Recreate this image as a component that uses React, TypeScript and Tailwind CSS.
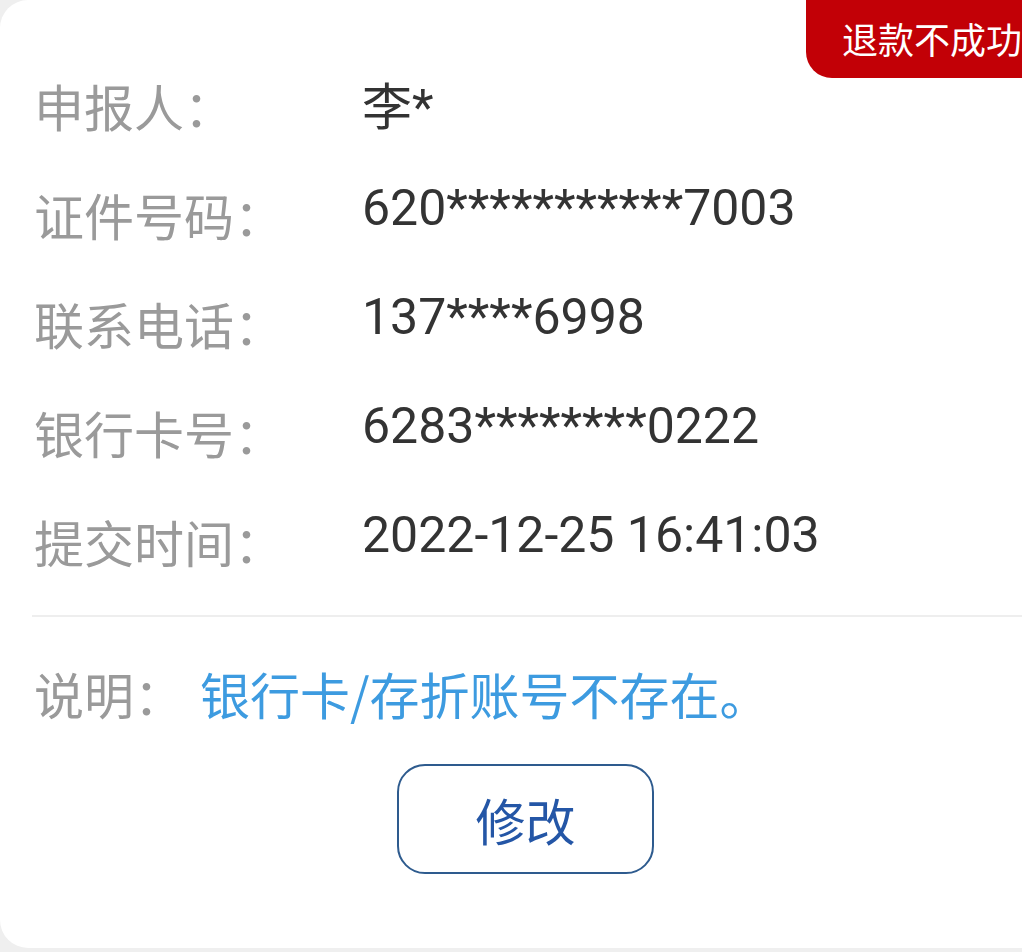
const rows = [
  { label: '申报人：', value: '李*', cjk: true },
  { label: '证件号码：', value: '620***********7003', cjk: false },
  { label: '联系电话：', value: '137****6998', cjk: false },
  { label: '银行卡号：', value: '6283********0222', cjk: false },
  { label: '提交时间：', value: '2022-12-25 16:41:03', cjk: false },
];

const App = () => {
  return (
    <div className="w-[1022px] h-[952px] bg-[#efefef] overflow-hidden font-['Roboto','Noto_Sans_CJK_SC',sans-serif]">
      {/* Card */}
      <div className="relative w-[1060px] h-[948px] bg-white rounded-l-[28px]">
        {/* Status badge */}
        <div className="absolute top-0 left-[806px] w-[254px] h-[78px] bg-[#c20006] rounded-bl-[26px] flex items-center pl-[36px]">
          <span className="text-white text-[36px] leading-none font-['Noto_Sans_CJK_SC',sans-serif] -translate-y-[1px]">退款不成功</span>
        </div>

        {/* Info rows */}
        <div className="pt-[44px] pl-[34px]">
          {rows.map((row) => (
            <div key={row.label} className="flex items-center h-[109px]">
              <span className="w-[328px] text-[50px] leading-none text-[#9a9a9a] font-['Noto_Sans_CJK_SC',sans-serif] translate-y-[6px]">
                {row.label}
              </span>
              <span className={row.cjk ? 'text-[50px] leading-none text-[#333333] translate-y-[9px]' : 'text-[50px] leading-none text-[#333333]'}>
                {row.value}
              </span>
            </div>
          ))}
        </div>

        {/* Divider */}
        <div className="mt-[26px] ml-[32px] h-[2px] bg-[#eeeeee]" />

        {/* Remark */}
        <div className="mt-[21px] pl-[34px] flex items-center h-[110px] font-['Noto_Sans_CJK_SC',sans-serif]">
          <span className="w-[166px] text-[50px] leading-none text-[#9a9a9a]">说明：</span>
          <span className="text-[50px] leading-none text-[#3d9be0]">银行卡/存折账号不存在。</span>
        </div>

        {/* Edit button */}
        <button className="mt-[16px] ml-[397px] w-[257px] h-[110px] border-2 border-[#2e5b8e] rounded-[28px] flex items-center justify-center bg-white">
          <span className="text-[50px] leading-none text-[#2456a6] font-['Noto_Sans_CJK_SC',sans-serif]">修改</span>
        </button>
      </div>
    </div>
  );
};

export default App;
